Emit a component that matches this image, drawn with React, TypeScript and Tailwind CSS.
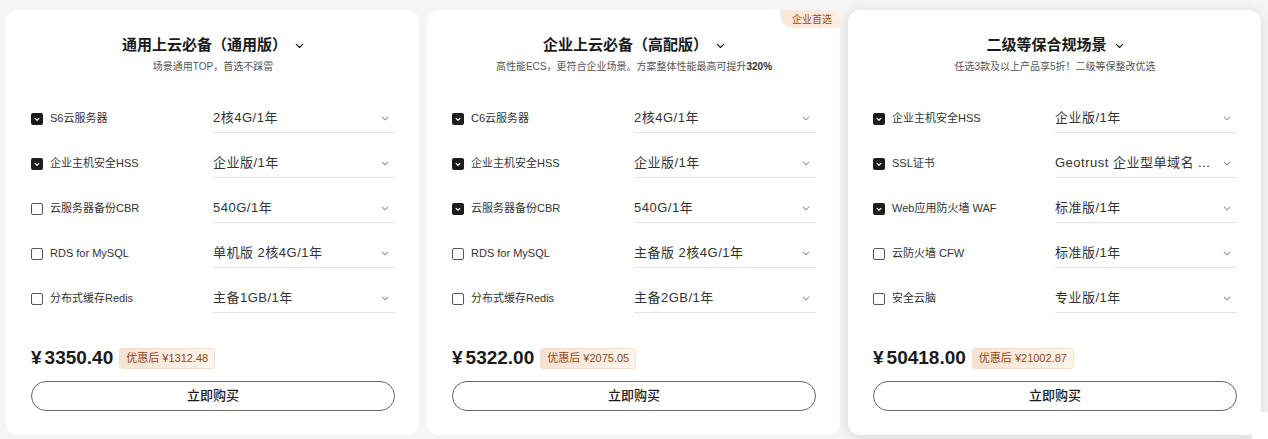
import React from "react";

type Item = { label: string; checked: boolean; value: string };
type Plan = {
  title: string;
  sub: React.ReactNode;
  items: Item[];
  price: string;
  after: string;
  tag?: string;
  hover?: boolean;
};

const plans: Plan[] = [
  {
    title: "通用上云必备（通用版）",
    sub: "场景通用TOP，首选不踩雷",
    items: [
      { label: "S6云服务器", checked: true, value: "2核4G/1年" },
      { label: "企业主机安全HSS", checked: true, value: "企业版/1年" },
      { label: "云服务器备份CBR", checked: false, value: "540G/1年" },
      { label: "RDS for MySQL", checked: false, value: "单机版 2核4G/1年" },
      { label: "分布式缓存Redis", checked: false, value: "主备1GB/1年" },
    ],
    price: "3350.40",
    after: "¥1312.48",
  },
  {
    title: "企业上云必备（高配版）",
    sub: (
      <>
        高性能ECS，更符合企业场景。方案整体性能最高可提升<span className="font-semibold text-[#333]">320%</span>
      </>
    ),
    items: [
      { label: "C6云服务器", checked: true, value: "2核4G/1年" },
      { label: "企业主机安全HSS", checked: true, value: "企业版/1年" },
      { label: "云服务器备份CBR", checked: true, value: "540G/1年" },
      { label: "RDS for MySQL", checked: false, value: "主备版 2核4G/1年" },
      { label: "分布式缓存Redis", checked: false, value: "主备2GB/1年" },
    ],
    price: "5322.00",
    after: "¥2075.05",
    tag: "企业首选",
  },
  {
    title: "二级等保合规场景",
    sub: "任选3款及以上产品享5折！二级等保整改优选",
    items: [
      { label: "企业主机安全HSS", checked: true, value: "企业版/1年" },
      { label: "SSL证书", checked: true, value: "Geotrust 企业型单域名 ..." },
      { label: "Web应用防火墙 WAF", checked: true, value: "标准版/1年" },
      { label: "云防火墙 CFW", checked: false, value: "标准版/1年" },
      { label: "安全云脑", checked: false, value: "专业版/1年" },
    ],
    price: "50418.00",
    after: "¥21002.87",
    hover: true,
  },
];

function Chevron({ className }: { className?: string }) {
  return (
    <svg viewBox="0 0 10 6" className={className} fill="none" stroke="currentColor" strokeWidth="1.4" strokeLinecap="round" strokeLinejoin="round">
      <path d="M1.5 1.2 5 4.6 8.5 1.2" />
    </svg>
  );
}

function Check({ on }: { on: boolean }) {
  if (!on)
    return <span className="h-3 w-3 shrink-0 rounded-[2px] border border-[#555] bg-white" />;
  return (
    <span className="flex h-3 w-3 shrink-0 items-center justify-center rounded-[2px] bg-[#1c1c1c]">
      <svg viewBox="0 0 10 10" className="h-2 w-2" fill="none" stroke="white" strokeWidth="1.5" strokeLinecap="round" strokeLinejoin="round">
        <path d="M2.6 4.2 5 6.6 7.4 4.2" />
      </svg>
    </span>
  );
}

function Card({ p }: { p: Plan }) {
  return (
    <div
      className={`relative flex h-[425px] w-[413px] shrink-0 flex-col rounded-xl bg-white pl-[25px] pr-6 pt-6 ${
        p.hover ? "shadow-[0_2px_14px_rgba(0,0,0,0.13)]" : ""
      }`}
    >
      {p.tag && (
        <div className="absolute right-0 top-0 flex h-[18px] w-[60px] items-center justify-center rounded-bl-[14px] rounded-tr-xl bg-gradient-to-r from-[#f9e6d6] to-[#fcefe2] pl-1 text-[10px] text-[#9a4f12]">
          {p.tag}
        </div>
      )}
      <div className="flex h-[22px] items-center justify-center gap-2 text-[15px] font-semibold text-[#1a1a1a]">
        <span>{p.title}</span>
        <Chevron className="mt-[2px] h-[6px] w-[9px] text-[#222]" />
      </div>
      <div className="mt-1 h-[14px] text-center text-[10px] leading-[14px] text-[#555]">{p.sub}</div>
      <div className="mt-[22px] flex flex-col">
        {p.items.map((it) => (
          <div key={it.label} className="grid h-[45px] grid-cols-2 items-center">
            <div className="flex items-center gap-[7px] text-[11px] text-[#333]">
              <Check on={it.checked} />
              <span>{it.label}</span>
            </div>
            <div className="flex h-[29px] min-w-0 items-center justify-between gap-1 border-b border-[#e5e5e5] pr-[6px]">
              <span className="min-w-0 overflow-hidden whitespace-nowrap text-[13px] tracking-[0.5px] text-[#333]">{it.value}</span>
              <Chevron className="h-[5px] w-[8px] shrink-0 text-[#999]" />
            </div>
          </div>
        ))}
      </div>
      <div className="mt-[23px] flex h-[28px] items-center gap-[6px]">
        <span className="text-[19px] font-bold text-[#1a1a1a]">
          ¥<span className="ml-[3px]">{p.price}</span>
        </span>
        <span className="flex h-[21px] items-center rounded-[3px] border border-[#f9dfc6] bg-gradient-to-r from-[#f6e2d2] to-[#fdf5ec] px-[6px] text-[11px] text-[#8a4a1d]">
          优惠后 {p.after}
        </span>
      </div>
      <button className="mt-[9px] h-[30px] w-full rounded-full border border-[#666] bg-white text-[13px] font-medium text-[#1a1a1a]">
        立即购买
      </button>
    </div>
  );
}

export default function App() {
  return (
    <div
      className="relative h-[439px] w-[1268px] overflow-hidden bg-[#f5f5f5]"
      style={{ fontFamily: '"Liberation Sans", "Noto Sans CJK SC", sans-serif' }}
    >
      <div className="flex gap-2 pl-[6px] pt-[10px]">
        {plans.map((p) => (
          <Card key={p.price} p={p} />
        ))}
      </div>
      <div className="absolute bottom-0 right-0 h-[27px] w-[16px] bg-white" />
    </div>
  );
}
